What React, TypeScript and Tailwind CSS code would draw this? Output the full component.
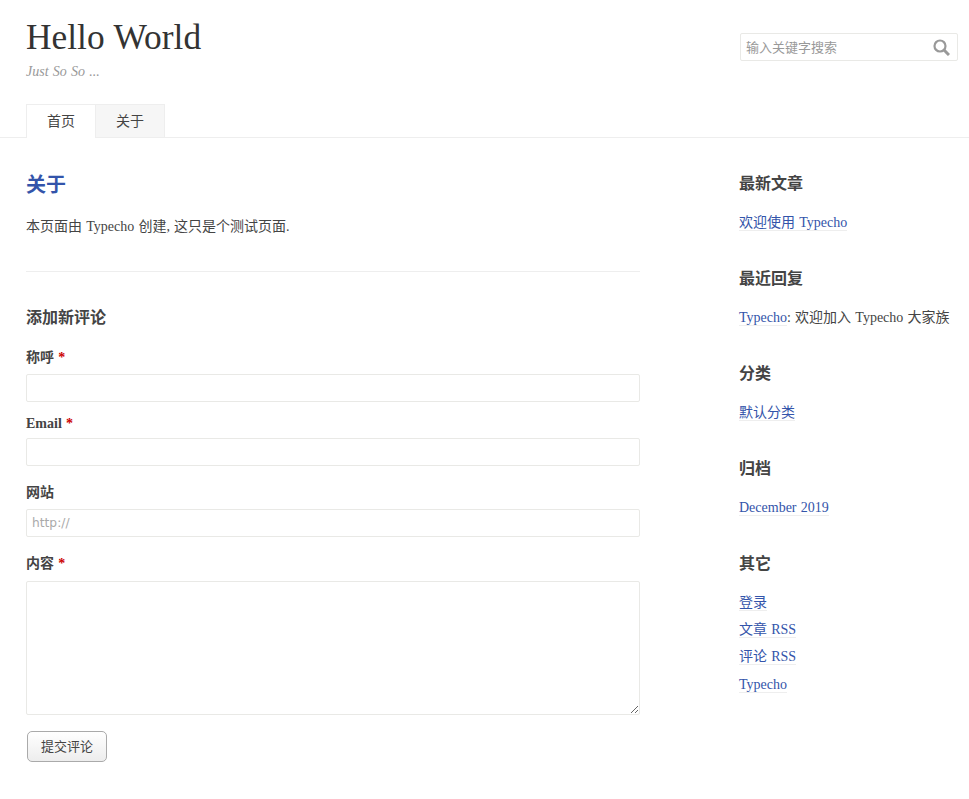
const serif = "font-['Liberation_Serif','Noto_Sans_CJK_SC',serif]";

const Sidebar = ({ title, children }: { title: string; children: React.ReactNode }) => (
  <section className="mb-[34px]">
    <h3 className="text-[16px] font-bold leading-[24px] mb-[16px]">{title}</h3>
    <ul className="text-[14px] leading-[21px]">{children}</ul>
  </section>
);

const Link = ({ children }: { children: React.ReactNode }) => (
  <a href="#" className="text-[#3354AA] border-b border-[#EEE]">{children}</a>
);

const Field = ({ label, required, className, labelClass, children }: { label: string; required?: boolean; className?: string; labelClass?: string; children: React.ReactNode }) => (
  <p className={className}>
    <label className={`block font-bold text-[14px] leading-[21px] ${labelClass}`}>
      {label}
      {required && <span className="text-[#C00]"> *</span>}
    </label>
    {children}
  </p>
);

const inputClass = "block w-full h-[28px] border border-[#E9E9E6] rounded-[2px] bg-white px-[5px] outline-none";

export default function App() {
  return (
    <div className={`${serif} min-h-screen bg-white text-[#444] text-[14px] leading-[21px] [word-spacing:0.05em]`}>
      <header className="h-[138px] border-b border-[#EEE] pl-[26px] pr-[11px] flex flex-col">
        <div className="flex justify-between">
          <div className="pt-[15px]">
            <h1 className="text-[35.4px] leading-[45px] text-[#333] font-normal">Hello World</h1>
            <p className="italic text-[#999] mt-[1px]">Just So So ...</p>
          </div>
          <div className="mt-[33px] w-[218px] h-[28px] border border-[#E9E9E6] rounded-[2px] flex items-center justify-between pl-[5px] pr-[7px]">
            <input placeholder="输入关键字搜索" className="w-[150px] text-[13px] outline-none placeholder:text-[#999]" />
            <svg width="17" height="17" viewBox="0 0 17 17" fill="none" stroke="#999" strokeWidth="2.2">
              <circle cx="7" cy="7" r="5.5" />
              <path d="M11 11l5 5" strokeWidth="3" />
            </svg>
          </div>
        </div>
        <nav className="mt-auto flex -mb-px">
          <a href="#" className="w-[70px] h-[34px] border border-b-0 border-[#EEE] bg-white flex items-center justify-center">首页</a>
          <a href="#" className="w-[69px] h-[34px] border border-l-0 border-[#EEE] bg-[#F6F6F6] flex items-center justify-center">关于</a>
        </nav>
      </header>
      <div className="flex pl-[26px]">
        <main className="w-[614px] pt-[34px]">
          <h1 className="text-[20px] leading-[26px] font-bold text-[#3354AA]">关于</h1>
          <p className="mt-[17px] leading-[24px]">本页面由 Typecho 创建, 这只是个测试页面.</p>
          <hr className="mt-[32px] border-[#EEE]" />
          <h3 className="mt-[34px] text-[16px] font-bold leading-[24px]">添加新评论</h3>
          <form>
            <Field label="称呼" required className="mt-[17px]" labelClass="mb-[6px]">
              <input className={inputClass} />
            </Field>
            <Field label="Email" required className="mt-[11px]" labelClass="mb-[4px]">
              <input className={inputClass} />
            </Field>
            <Field label="网站" className="mt-[16px]" labelClass="mb-[6px]">
              <input placeholder="http://" className={`${inputClass} font-['DejaVu_Sans',sans-serif] text-[12.25px] placeholder:text-[#aaa]`} />
            </Field>
            <Field label="内容" required className="mt-[16px]" labelClass="mb-[7px]">
              <textarea className="block w-full h-[134px] border border-[#E9E9E6] rounded-[2px] outline-none" />
            </Field>
            <button type="button" className="mt-[16px] ml-px w-[80px] h-[31px] border border-[#AAA] rounded-[5px] bg-gradient-to-b from-white to-[#EDEDED] text-[13px] text-[#444]">提交评论</button>
          </form>
        </main>
        <aside className="ml-[99px] w-[220px] pt-[34px]">
          <Sidebar title="最新文章">
            <li><Link>欢迎使用 Typecho</Link></li>
          </Sidebar>
          <Sidebar title="最近回复">
            <li className="whitespace-nowrap"><Link>Typecho</Link>: 欢迎加入 Typecho 大家族</li>
          </Sidebar>
          <Sidebar title="分类">
            <li><Link>默认分类</Link></li>
          </Sidebar>
          <Sidebar title="归档">
            <li><Link>December 2019</Link></li>
          </Sidebar>
          <Sidebar title="其它">
            <li className="mb-[6px]"><Link>登录</Link></li>
            <li className="mb-[6px]"><Link>文章 RSS</Link></li>
            <li className="mb-[7px]"><Link>评论 RSS</Link></li>
            <li><Link>Typecho</Link></li>
          </Sidebar>
        </aside>
      </div>
    </div>
  );
}
